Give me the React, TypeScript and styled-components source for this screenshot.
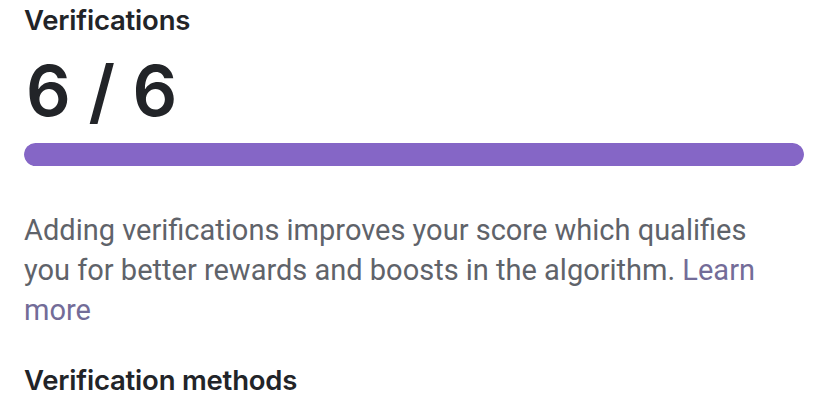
import styled, { createGlobalStyle } from "styled-components";

const GlobalStyle = createGlobalStyle`
  html, body {
    margin: 0;
    padding: 0;
    background: #ffffff;
  }
  body {
    font-family: Inter, "Noto Sans", sans-serif;
  }
`;

const Page = styled.div`
  width: 828px;
  height: 414px;
  overflow: hidden;
  box-sizing: border-box;
  padding: 0 24px;
  display: flex;
  flex-direction: column;
`;

const Heading = styled.h2<{ $top?: number }>`
  margin: ${(p) => p.$top ?? 0}px 0 0;
  font-size: 27.5px;
  font-weight: 600;
  line-height: 40px;
  color: #222428;
  letter-spacing: -0.2px;
`;

const Score = styled.div`
  margin-top: 11px;
  padding-left: 2px;
  font-size: 70px;
  font-weight: 600;
  line-height: 80px;
  color: #222428;
`;

const Track = styled.div`
  margin-top: 12px;
  width: 780px;
  height: 23px;
  border-radius: 12px;
  background: #ece9f5;
  overflow: hidden;
`;

const Fill = styled.div`
  height: 100%;
  border-radius: 12px;
  background: #8566c6;
`;

const Text = styled.p`
  margin: 44px 0 0;
  max-width: 760px;
  font-family: Roboto, Inter, sans-serif;
  font-size: 29px;
  line-height: 40px;
  color: #5f636a;
`;

const Link = styled.a`
  color: #736c98;
  text-decoration: none;
`;

export default function App() {
  const done = 6;
  const total = 6;
  return (
    <>
      <GlobalStyle />
      <Page>
        <Heading>Verifications</Heading>
        <Score>
          {done} / {total}
        </Score>
        <Track>
          <Fill style={{ width: `${(done / total) * 100}%` }} />
        </Track>
        <Text>
          Adding verifications improves your score which qualifies you for
          better rewards and boosts in the algorithm. <Link href="#">Learn more</Link>
        </Text>
        <Heading $top={30}>Verification methods</Heading>
      </Page>
    </>
  );
}
